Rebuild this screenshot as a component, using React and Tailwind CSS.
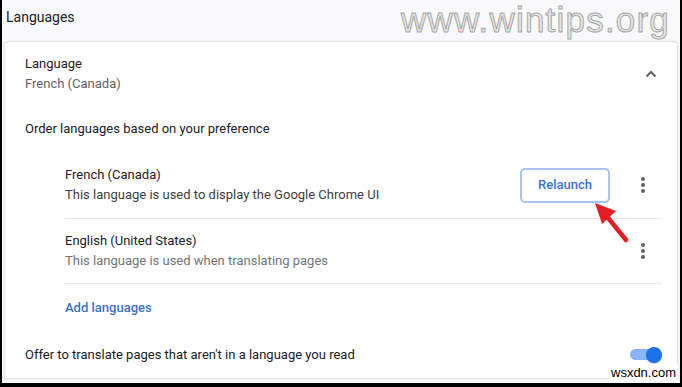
import React from "react";

function Kebab() {
  return (
    <div className="w-6 h-6 flex flex-col items-center justify-center gap-[2.5px]">
      <span className="block w-[3.5px] h-[3.5px] rounded-full bg-[#5f6368]" />
      <span className="block w-[3.5px] h-[3.5px] rounded-full bg-[#5f6368]" />
      <span className="block w-[3.5px] h-[3.5px] rounded-full bg-[#5f6368]" />
    </div>
  );
}

export default function App() {
  return (
    <div className="w-[682px] h-[387px] bg-black pl-[2px] pr-[2px] pb-[4px] font-['Roboto',sans-serif]">
      <div className="relative h-full bg-[#f8f9fa] flex flex-col">
        <div className="h-[41px] flex items-start justify-between pl-[4px] pr-[10px]">
          <span className="text-[14px] text-[#202124] leading-[20px] mt-[7px]">Languages</span>
          <span className="font-['Liberation_Sans',Arial,sans-serif] text-[35px] leading-[40px] tracking-[1.2px] text-[#e6e6e6] [-webkit-text-stroke:1px_#a8a8a8]">
            www.wintips.org
          </span>
        </div>
        <div className="mx-[2px] bg-white border border-[#e3e3e3] rounded-t-[4px] shadow-[0_0_2px_rgba(0,0,0,0.08)] flex flex-col text-[13px] leading-[20px]">
          <div className="pt-[12px] pl-[20px] pr-[16px] flex items-center justify-between">
            <div className="flex flex-col">
              <span className="text-[#202124]">Language</span>
              <span className="text-[#5f6368]">French (Canada)</span>
            </div>
            <div className="w-5 h-5 flex items-center justify-center">
              <svg width="12" height="8" viewBox="0 0 12 8">
                <path d="M1.5 6.5 L6 2 L10.5 6.5" fill="none" stroke="#5f6368" strokeWidth="2" />
              </svg>
            </div>
          </div>
          <div className="mt-[25px] pl-[20px] text-[#202124]">Order languages based on your preference</div>
          <div className="mt-[13px] ml-[60px] mr-[15px] h-[67px] border-b border-[#e8e8e8] flex items-center justify-between">
            <div className="flex flex-col">
              <span className="text-[#202124]">French (Canada)</span>
              <span className="text-[#3c4043]">This language is used to display the Google Chrome UI</span>
            </div>
            <div className="flex items-center gap-[21px] pr-[7px]">
              <div className="w-[90px] h-[35px] border-2 border-[#a9c4ef] rounded-[5px] flex items-center justify-center text-[13px] font-medium text-[#3b72d9]">
                Relaunch
              </div>
              <Kebab />
            </div>
          </div>
          <div className="ml-[60px] mr-[15px] h-[65px] border-b border-[#e8e8e8] flex items-center justify-between">
            <div className="flex flex-col">
              <span className="text-[#202124]">English (United States)</span>
              <span className="text-[#70757a]">This language is used when translating pages</span>
            </div>
            <div className="pr-[7px]">
              <Kebab />
            </div>
          </div>
          <div className="ml-[60px] h-[47px] flex items-center text-[#3b6fd4] font-medium">Add languages</div>
          <div className="pl-[20px] pr-[15px] h-[47px] flex items-center justify-between">
            <span className="text-[#202124]">Offer to translate pages that aren't in a language you read</span>
            <div className="relative w-[32px] h-[16px] flex items-center">
              <div className="w-[26px] h-[11px] rounded-full bg-[#8ab4f8]" />
              <div className="absolute right-0 top-0 w-[16px] h-[16px] rounded-full bg-[#1a73e8] shadow-[0_1px_1px_rgba(0,0,0,0.2)]" />
            </div>
          </div>
        </div>
        <svg className="absolute left-0 top-0 pointer-events-none" width="678" height="383" viewBox="0 0 678 383">
          <line x1="624" y1="240" x2="603" y2="214" stroke="#e31e24" strokeWidth="4.5" strokeLinecap="round" />
          <polygon points="593,203 614,211 600,224" fill="#e31e24" />
        </svg>
        <div className="absolute left-[607px] top-[364px] px-[2px] bg-white font-['Liberation_Sans',Arial,sans-serif] text-[13px] leading-[17px] text-black">
          wsxdn.com
        </div>
      </div>
    </div>
  );
}
